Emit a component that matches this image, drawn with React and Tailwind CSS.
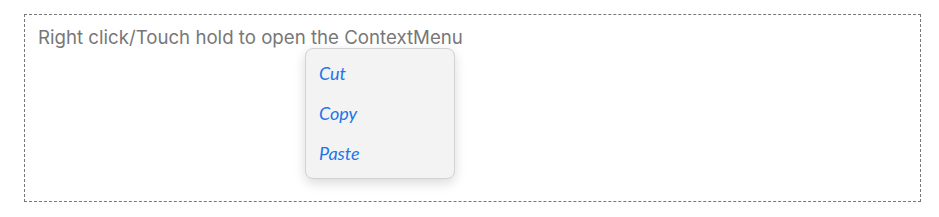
import React from "react";

export default function App() {
  return (
    <div className="w-[939px] h-[217px] bg-white pt-[14px] pl-[24px]">
      <div className="relative w-[897px] h-[188px] border border-dashed border-[#777777] px-[13px] py-[9px]">
        <div className="text-[18.67px] leading-[28px] text-[#777777]" style={{ fontFamily: "Inter, sans-serif" }}>
          Right click/Touch hold to open the ContextMenu
        </div>
        <div className="absolute left-[280px] top-[33px] w-[150px] h-[131px] bg-[#f3f3f3] border border-[#d2d2d2] rounded-[8px] shadow-[0_4px_12px_rgba(0,0,0,0.15)] pt-[4px]">
          {["Cut", "Copy", "Paste"].map((t) => (
            <div
              key={t}
              className="h-[40px] flex items-center pl-[13px] text-[18px] italic font-normal text-[#2374ea]"
              style={{ fontFamily: "Lato, sans-serif" }}
            >
              {t}
            </div>
          ))}
        </div>
      </div>
    </div>
  );
}
